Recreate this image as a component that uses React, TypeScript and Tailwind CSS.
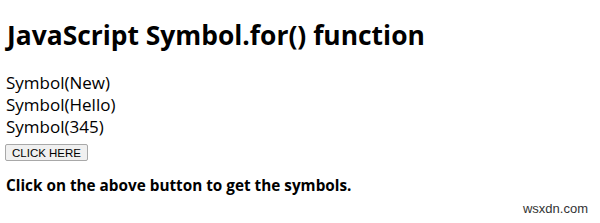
export default function App() {
  return (
    <div className="relative w-[600px] h-[223px] bg-white text-black overflow-hidden" style={{ fontFamily: '"Open Sans", "Noto Sans", sans-serif' }}>
      <div className="px-[7px] pt-[20px]">
        <h1 className="text-[26.4px] font-bold leading-[30px]">JavaScript Symbol.for() function</h1>
        <div className="mt-[22px] text-[17px] leading-[22px] -ml-[1px]">
          <div>Symbol(New)</div>
          <div>Symbol(Hello)</div>
          <div>Symbol(345)</div>
        </div>
        <button className="-ml-[2px] mt-[6px] h-[17px] w-[83px] rounded-[2px] border border-[#a8a8a8] bg-[#f0f0f0] text-center text-[11.5px] leading-[14px] text-black" style={{ fontFamily: '"Liberation Sans", Arial, sans-serif' }}>CLICK HERE</button>
        <p className="mt-[12px] text-[15.3px] font-bold leading-[20px] -ml-[1px]">Click on the above button to get the symbols.</p>
      </div>
      <div className="absolute right-[12px] bottom-[5px] text-[13px] text-[#333]" style={{ fontFamily: '"Liberation Sans", Arial, sans-serif' }}>wsxdn.com</div>
    </div>
  );
}
